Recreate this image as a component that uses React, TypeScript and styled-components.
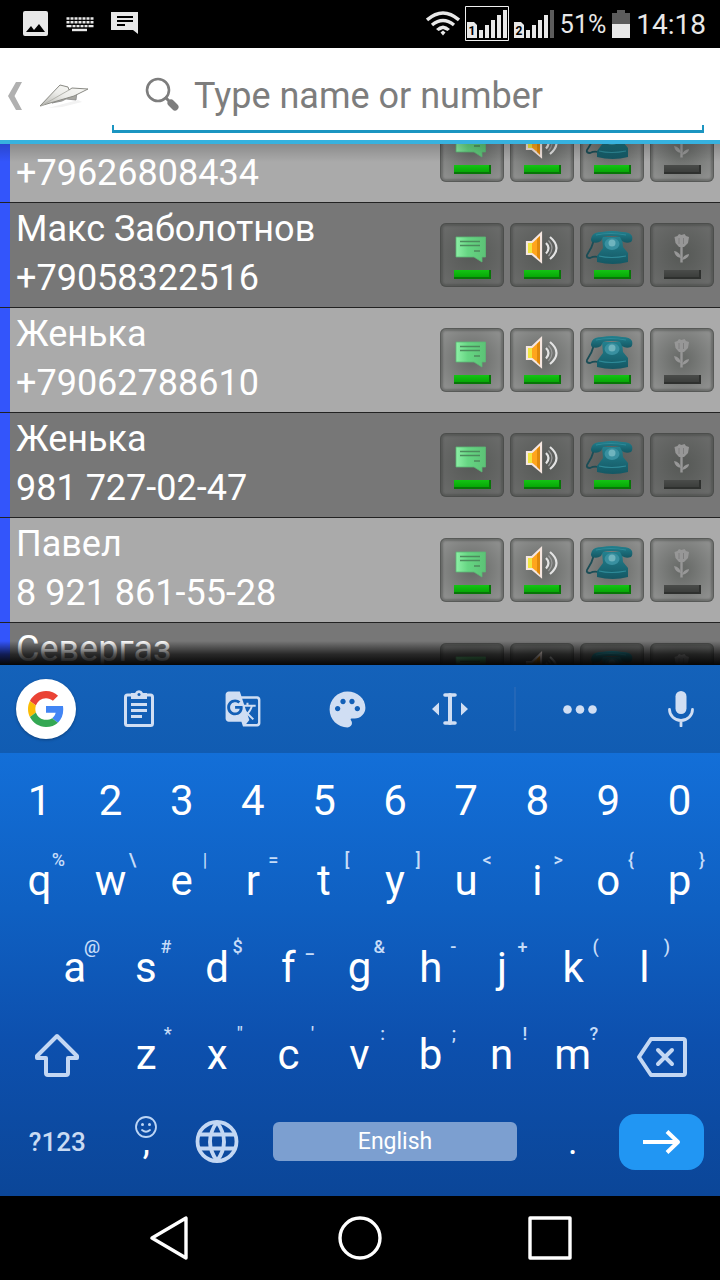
import React from 'react';
import styled, { createGlobalStyle, css } from 'styled-components';
import { MdGTranslate, MdPalette } from 'react-icons/md';

const GlobalStyle = createGlobalStyle`
  * { box-sizing: border-box; }
  body { margin: 0; background: #000; font-family: Roboto, "Liberation Sans", sans-serif; }
  button { border: 0; padding: 0; margin: 0; background: none; color: inherit; font: inherit; cursor: pointer; }
  svg { display: block; flex: none; }
`;

const Screen = styled.div`
  display: flex;
  flex-direction: column;
  height: 100vh;
  overflow: hidden;
`;

/* ---------- status bar ---------- */

const StatusBar = styled.div`
  flex: none;
  display: flex;
  justify-content: space-between;
  align-items: center;
  height: 48px;
  padding: 0 14px 0 22px;
  background: #000;
  color: #e8e8e8;
`;

const StatusGroup = styled.div<{ $gap: number }>`
  display: flex;
  align-items: center;
  gap: ${(p) => p.$gap}px;
`;

const StatusText = styled.span<{ $size: number }>`
  font-size: ${(p) => p.$size}px;
  line-height: 32px;
  padding-top: 2px;
`;

const PictureIcon = () => (
  <svg width="27" height="27" viewBox="0 0 27 27" aria-hidden="true">
    <path fillRule="evenodd" fill="#e8e8e8" d="M3 0h21a2 2 0 0 1 2 2v21a2 2 0 0 1-2 2H3a2 2 0 0 1-2-2V2a2 2 0 0 1 2-2ZM4 21h19l-6-8-5 6-3-4Z" />
  </svg>
);

const KeyboardIcon = () => (
  <svg width="28" height="27" viewBox="0 0 28 27" aria-hidden="true">
    <g stroke="#e8e8e8" strokeWidth="2.4">
      <path d="M.5 7.500h27" strokeDasharray="3 1" />
      <path d="M.5 11.300h27" strokeDasharray="3 1" />
      <path d="M.5 15.100h27" strokeDasharray="5 1 3 1 3 1 3 1 3 1 5 1" />
      <path d="M6 19h15" />
    </g>
  </svg>
);

const MessageIcon = () => (
  <svg width="28" height="27" viewBox="0 0 28 27" aria-hidden="true">
    <path fill="#e8e8e8" d="M-1 1h27v22l-5-4H-1Z" transform="translate(1 0)" />
    <path stroke="#000" strokeWidth="2" d="M6 6h16M6 10h16M6 14h8" />
  </svg>
);

const WifiIcon = () => (
  <svg width="34" height="26" viewBox="0 0 34 26" aria-hidden="true">
    <g fill="none" stroke="#e8e8e8" strokeWidth="3.400">
      <path d="M1 9Q17-5 33 9" />
      <path d="M6 14Q17 5 28 14" />
    </g>
    <path fill="#e8e8e8" d="M10 18q7-7 14 0l-2.500 2-4.500-2-4.500 2Z" />
    <path fill="#e8e8e8" d="M17 19.500l2.500 2-2.500 3-2.500-3Z" />
  </svg>
);

const SignalIcon = ({ sim, full }: { sim: string; full?: boolean }) => (
  <svg width={full ? 44 : 41} height="36" viewBox={full ? '0 0 44 36' : '2 0 41 36'} aria-hidden="true">
    {full && <path d="M.5.500h43v34H.5Z" fill="none" stroke="#f0f0f0" />}
    <path fill="#e8e8e8" d="M2 16h7l3 3v13H2Z" />
    <text x="7" y="29" fontSize="12" fontWeight="700" textAnchor="middle" fill="#000">{sim}</text>
    <path fill="#e8e8e8" d="M14 24h4v8h-4ZM20 19h4v13h-4ZM26 14h4v18h-4ZM32 9h4v23h-4Z" />
    <path fill={full ? '#e8e8e8' : '#5c5c5c'} d="M38 4h4v28h-4Z" />
  </svg>
);

const BatteryIcon = () => (
  <svg width="18" height="28" viewBox="0 0 18 28" aria-hidden="true">
    <path fill="#5c5c5c" d="M5 0h8v3h5v11H0V3h5Z" />
    <path fill="#e8e8e8" d="M0 14h18v14H0Z" />
  </svg>
);

/* ---------- search header ---------- */

const Header = styled.header`
  flex: none;
  display: flex;
  align-items: stretch;
  height: 96px;
  padding-right: 16px;
  background: #fff;
  border-bottom: 4px solid #37b2df;
`;

const UpButton = styled.button`
  flex: none;
  display: flex;
  align-items: center;
  gap: 17px;
  width: 112px;
  padding: 4px 0 0 7px;
`;

const SearchField = styled.label`
  flex: 1;
  display: flex;
  align-items: center;
  gap: 14px;
  min-width: 0;
  margin-bottom: 7px;
  padding: 10px 8px 0 32px;
  background:
    linear-gradient(#1b95c1, #1b95c1) left bottom / 2px 8px no-repeat,
    linear-gradient(#1b95c1, #1b95c1) right bottom / 2px 8px no-repeat,
    linear-gradient(#1b95c1, #1b95c1) left bottom / 100% 3px no-repeat;
`;

const SearchInput = styled.input`
  flex: 1;
  min-width: 0;
  height: 48px;
  padding: 0;
  border: 0;
  outline: 0;
  background: none;
  font: 36px Roboto, "Liberation Sans", sans-serif;
  color: #222;
  &::placeholder { color: #7d7d7d; opacity: 1; }
`;

const ChevronIcon = () => (
  <svg width="16" height="28" viewBox="0 0 16 28" aria-hidden="true">
    <path fill="#b0b0b0" d="M9 0h6L7.500 14 15 28H9L1 14Z" />
  </svg>
);

const PlaneIcon = () => (
  <svg width="50" height="28" viewBox="0 0 50 28" aria-hidden="true">
    <defs>
      <linearGradient id="wing" x1="0" y1="1" x2="1" y2="0">
        <stop offset="0" stopColor="#b4b4ae" />
        <stop offset=".5" stopColor="#ededea" />
        <stop offset="1" stopColor="#fafaf7" />
      </linearGradient>
    </defs>
    <path fill="#f2f2f2" d="M8 26l30-8 4 2-20 5Z" />
    <path fill="#a8a8a2" stroke="#888" strokeWidth=".8" d="M12 21l25-11-1 8-10-1-4 2Z" />
    <path fill="url(#wing)" stroke="#8a8a84" strokeWidth="1" strokeLinejoin="round" d="M0 24L20 3l8 2 1 3 3-2 16 1L34 14Z" />
    <path fill="none" stroke="#b4b4ae" strokeWidth="1" d="M1 24L29 8" />
  </svg>
);

const SearchIcon = () => (
  <svg width="36" height="38" viewBox="0 0 36 38" aria-hidden="true">
    <circle cx="14" cy="13" r="11" fill="none" stroke="#7d7d7d" strokeWidth="2.600" />
    <path stroke="#7d7d7d" strokeWidth="3" d="M21 20l5 5" />
    <path stroke="#7d7d7d" strokeWidth="7" strokeLinecap="round" d="M27 26l4 4" />
  </svg>
);

/* ---------- contact list ---------- */

const Contacts = styled.ul`
  flex: 1 1 0;
  min-height: 0;
  position: relative;
  display: flex;
  flex-direction: column;
  margin: 0;
  padding: 0;
  list-style: none;
  overflow: hidden;
  &::before, &::after {
    content: '';
    position: absolute;
    left: 0;
    right: 0;
    pointer-events: none;
    z-index: 1;
  }
  &::before { top: 0; height: 18px; background: linear-gradient(rgba(0, 0, 0, .18), transparent); }
  &::after { bottom: 0; height: 24px; background: linear-gradient(transparent, rgba(0, 0, 0, .66) 55%, #060606); }
`;

type Cut = 'top' | 'bottom' | undefined;

const ContactRow = styled.li<{ $dark: boolean; $cut: Cut }>`
  flex: none;
  display: flex;
  justify-content: space-between;
  align-items: flex-start;
  height: 105px;
  overflow: hidden;
  padding: 0 6px 0 16px;
  background: linear-gradient(to right, #3355fb 10px, ${(p) => (p.$dark ? '#777' : '#aaa')} 10px);
  box-shadow: inset 0 -1px #222;
  ${(p) => p.$cut === 'top' && css`
    height: 59px;
    align-items: flex-end;
  `}
  ${(p) => p.$cut === 'bottom' && css`
    flex: 1 1 0;
    height: auto;
    box-shadow: none;
  `}
`;

const ContactText = styled.div`
  padding: 2px 0 5px;
  font-size: 36px;
  line-height: 49px;
  color: #fff;
  white-space: nowrap;
`;

const Toggles = styled.div`
  display: flex;
  gap: 6px;
  padding: 20px 0 21px;
`;

const Toggle = styled.button`
  display: flex;
  flex-direction: column;
  align-items: center;
  width: 64px;
  height: 64px;
  border-radius: 6px;
  background: radial-gradient(circle at 50% 50%, rgba(72, 76, 72, .66) 10%, rgba(72, 76, 72, .26) 90%);
  box-shadow: inset 0 0 0 1px rgba(60, 62, 60, .4), inset 0 0 2px 3px rgba(60, 62, 60, .4);
`;

const Led = styled.span<{ $on: boolean }>`
  width: 37px;
  height: 9px;
  background: ${(p) => (p.$on ? 'linear-gradient(#14c414, #07a807)' : 'linear-gradient(#4a4c4a, #3c3e3c)')};
  border: solid ${(p) => (p.$on ? '#087508' : '#2e302e')};
  border-width: 0 2px 2px 0;
`;

const ChatGlyph = () => (
  <svg width="64" height="47" viewBox="0 0 64 47" aria-hidden="true">
    <defs>
      <linearGradient id="chat" x1="0" y1="0" x2="1" y2="0">
        <stop offset="0" stopColor="#8df0a6" />
        <stop offset=".4" stopColor="#66d683" />
        <stop offset="1" stopColor="#5cc276" />
      </linearGradient>
    </defs>
    <path fill="url(#chat)" stroke="#5bb873" strokeWidth=".8" d="M16 14h29.500v20H42v5l-8-5H16Z" />
    <path stroke="#4d8a5d" strokeWidth="1.600" d="M20 18.500h20M20 22.500h20M34 28h6" />
  </svg>
);

const SpeakerGlyph = () => (
  <svg width="64" height="47" viewBox="0 0 64 47" aria-hidden="true">
    <path fill="#ffa51c" stroke="#f5e6e0" strokeWidth="2.200" d="M17 19h5l9-8.500v28L22 31h-5Z" />
    <path fill="#f2e640" d="M18 20h4v10h-4Z" />
    <path fill="#e08a0c" d="M27 16l3-3v24l-3-3Z" />
    <path fill="none" stroke="#e4e4e4" strokeWidth="2.200" d="M36 20q5 5 0 10.500M40 14q13 11 0 22" />
    <path fill="none" stroke="#9c9c9c" strokeWidth="1.200" d="M38.500 17.500q7 7.500 0 15.500" />
  </svg>
);

const PhoneGlyph = () => (
  <svg width="64" height="47" viewBox="0 0 64 47" aria-hidden="true">
    <defs>
      <linearGradient id="phone" x1="0" y1="0" x2="0" y2="1">
        <stop offset="0" stopColor="#23818f" />
        <stop offset="1" stopColor="#145763" />
      </linearGradient>
    </defs>
    <path fill="none" stroke="#1b4d56" strokeWidth="1.800" d="M14 17q-2 8-7 15-1 3 3 3 4-2 8-1" />
    <path fill="url(#phone)" d="M22 14h20l1 10 5 6v9q-15 4-31 0v-6l6-8Z" />
    <path fill="url(#phone)" d="M12 13q2-4 10-4 10-2 20 0 8 0 10 4 1 4-1 6-5 2-9-1l-2-4q-9-2-17 0l-2 4q-4 3-9 1-2-2 0-6Z" />
    <ellipse cx="32" cy="21" rx="7.500" ry="6" fill="#3990a0" />
    <circle cx="32" cy="20" r="3.500" fill="#6fb4be" />
    <path stroke="#2f8b99" strokeWidth="1.200" d="M19 33q12 3 27 0M16 12q14-3 30 0" fill="none" />
  </svg>
);

const FlowerGlyph = () => (
  <svg width="64" height="47" viewBox="0 0 64 47" aria-hidden="true">
    <path fill="#979797" d="M24.500 14l3-1 1.500-2 2.500 1 3-1 1.500 2 3 1-1 6-4 4h-5l-3.500-4Z" />
    <path stroke="#7e7e7e" strokeWidth="1" d="M29 15v6M33.500 15v6" />
    <path fill="none" stroke="#979797" strokeWidth="2.400" d="M31.500 24v15.500" />
    <path fill="#979797" d="M31 35q-6-1-7-7 6 1 7 7ZM32 37q1-5 7-6 0 4-7 6Z" />
  </svg>
);

const toggles = [
  { label: 'Messages', glyph: <ChatGlyph />, on: true },
  { label: 'Sound', glyph: <SpeakerGlyph />, on: true },
  { label: 'Calls', glyph: <PhoneGlyph />, on: true },
  { label: 'Flower', glyph: <FlowerGlyph />, on: false },
];

const contacts: { name?: string; phone?: string; dark: boolean; cut?: Cut }[] = [
  { phone: '+79626808434', dark: false, cut: 'top' },
  { name: 'Макс Заболотнов', phone: '+79058322516', dark: true },
  { name: 'Женька', phone: '+79062788610', dark: false },
  { name: 'Женька', phone: '981 727-02-47', dark: true },
  { name: 'Павел', phone: '8 921 861-55-28', dark: false },
  { name: 'Севергаз', dark: true, cut: 'bottom' },
];

/* ---------- keyboard ---------- */

const Keyboard = styled.section`
  flex: none;
  color: #fff;
`;

const Tools = styled.div`
  display: grid;
  grid-template-columns: 87fr 104fr 104fr 104fr 102fr 28fr 102fr 89fr;
  align-items: center;
  height: 88px;
  background: linear-gradient(#1462ba, #115cb2);
  color: #d0def3;
`;

const Tool = styled.button<{ $side?: 'left' | 'right' }>`
  display: flex;
  align-items: center;
  justify-content: center;
  height: 88px;
  ${(p) => p.$side === 'left' && css`justify-content: flex-start; padding-left: 16px;`}
  ${(p) => p.$side === 'right' && css`justify-content: flex-end; padding-right: 25px;`}
`;

const GoogleDisc = styled.span`
  display: flex;
  align-items: center;
  justify-content: center;
  width: 60px;
  height: 60px;
  border-radius: 50%;
  background: #fff;
  box-shadow: 0 1px 3px rgba(0, 0, 0, .3);
`;

const ToolDivider = styled.span`
  justify-self: center;
  width: 2px;
  height: 44px;
  background: #2367b8;
`;

const Keys = styled.div`
  padding: 12px 5px 11px 4px;
  background: linear-gradient(#136fd8, #0f60c2 35%, #0d50ae 65%, #0b4698);
`;

const KeyRow = styled.div<{ $columns: string; $height?: number; $inset?: number }>`
  display: grid;
  grid-template-columns: ${(p) => p.$columns};
  height: ${(p) => p.$height ?? 87}px;
  padding: 0 ${(p) => p.$inset ?? 0}px;
`;

const Key = styled.button<{ $size?: number }>`
  position: relative;
  display: flex;
  align-items: center;
  justify-content: center;
  min-width: 0;
  font-size: ${(p) => p.$size ?? 42}px;
  line-height: 48px;
`;

const ModeKey = styled(Key)`
  font-size: 26px;
  font-weight: 500;
  color: #c9dbf3;
`;

const Hint = styled.span`
  position: absolute;
  top: 13px;
  right: 10px;
  font-size: 18px;
  font-weight: 500;
  line-height: 20px;
  color: #c6dcf8;
`;

const EmojiHint = styled.span`
  position: absolute;
  top: 18px;
  left: 0;
  right: 0;
  display: flex;
  justify-content: center;
`;

const SpaceKey = styled.button`
  align-self: center;
  height: 39px;
  margin: 0 20px;
  border-radius: 6px;
  background: #7c9fd0;
  font-size: 23px;
  line-height: 40px;
`;

const EnterKey = styled.button`
  align-self: center;
  display: flex;
  align-items: center;
  justify-content: center;
  height: 56px;
  margin: 0 11px;
  border-radius: 16px;
  background: #2196f3;
`;

const GoogleG = () => (
  <svg width="36" height="36" viewBox="0 0 48 48" aria-hidden="true">
    <path fill="#EA4335" d="M24 9.500c3.540 0 6.710 1.220 9.210 3.600l6.850-6.850C35.900 2.380 30.470 0 24 0 14.620 0 6.510 5.380 2.560 13.220l7.980 6.190C12.430 13.720 17.740 9.500 24 9.500z" />
    <path fill="#4285F4" d="M46.980 24.550c0-1.570-.15-3.090-.38-4.550H24v9.020h12.940c-.58 2.960-2.260 5.480-4.780 7.180l7.730 6c4.510-4.180 7.090-10.360 7.090-17.650z" />
    <path fill="#FBBC05" d="M10.530 28.590c-.48-1.450-.76-2.990-.76-4.590s.27-3.140.76-4.590l-7.980-6.190C.92 16.460 0 20.120 0 24c0 3.880.92 7.540 2.560 10.780l7.970-6.190z" />
    <path fill="#34A853" d="M24 48c6.480 0 11.930-2.130 15.890-5.810l-7.730-6c-2.150 1.450-4.920 2.300-8.160 2.300-6.260 0-11.570-4.220-13.470-9.910l-7.980 6.190C6.510 42.620 14.620 48 24 48z" />
  </svg>
);

const ClipboardIcon = () => (
  <svg width="30" height="38" viewBox="0 0 30 38" aria-hidden="true">
    <rect x="1.500" y="5" width="27" height="30.500" rx="2" fill="none" stroke="currentColor" strokeWidth="3" />
    <path fill="currentColor" d="M7 3h4a4.300 4.300 0 0 1 8 0h4v6H7Z" />
    <circle cx="15" cy="4.500" r="1.500" fill="#135fb6" />
    <path stroke="currentColor" strokeWidth="3" d="M7 14.500h16M7 20.500h16M7 26.500h11" />
  </svg>
);

const TextCursorIcon = () => (
  <svg width="36" height="32" viewBox="0 0 36 32" aria-hidden="true">
    <g fill="none" stroke="currentColor" strokeWidth="4" strokeLinecap="round">
      <path d="M18 2v28" />
      <path d="M13 2h10M13 30h10" strokeWidth="3.600" />
    </g>
    <path fill="currentColor" d="M7 9.500v13L0 16ZM29 9.500v13l7-6.500Z" />
  </svg>
);

const MoreIcon = () => (
  <svg width="34" height="10" viewBox="0 0 34 10" fill="currentColor" aria-hidden="true">
    <circle cx="4.500" cy="5.500" r="4.300" />
    <circle cx="17" cy="5.500" r="4.300" />
    <circle cx="29.500" cy="5.500" r="4.300" />
  </svg>
);

const MicIcon = () => (
  <svg width="28" height="36" viewBox="0 0 28 36" aria-hidden="true">
    <rect x="8.500" y="0" width="11" height="23" rx="5.500" fill="currentColor" />
    <path fill="none" stroke="currentColor" strokeWidth="2.800" strokeLinecap="round" d="M2.500 18.500a11.500 11 0 0 0 23 0M14 30v5" />
  </svg>
);

const ShiftIcon = () => (
  <svg width="46" height="46" viewBox="0 0 46 46" aria-hidden="true">
    <path fill="none" stroke="#c3d7f3" strokeWidth="4" strokeLinejoin="round" d="M23 4L3 24v2h9v15q0 2 2 2h18q2 0 2-2V26h9v-2Z" />
  </svg>
);

const BackspaceIcon = () => (
  <svg width="52" height="44" viewBox="0 0 52 44" aria-hidden="true">
    <g fill="none" stroke="#c3d7f3" strokeWidth="4" strokeLinejoin="round" strokeLinecap="round">
      <path d="M15 6h32q2 0 2 2v32q0 2-2 2H15L3 24Z" />
      <path d="M22 17l14 14M36 17L22 31" />
    </g>
  </svg>
);

const SmileIcon = () => (
  <svg width="22" height="22" viewBox="0 0 22 22" aria-hidden="true">
    <g fill="none" stroke="#bcd5f5" strokeWidth="1.800" strokeLinecap="round">
      <circle cx="11" cy="11" r="10" />
      <path d="M7 14q4 3.500 8 0" />
    </g>
    <circle cx="7.500" cy="8.500" r="1.500" fill="#bcd5f5" />
    <circle cx="14.500" cy="8.500" r="1.500" fill="#bcd5f5" />
  </svg>
);

const GlobeIcon = () => (
  <svg width="44" height="44" viewBox="0 0 44 44" aria-hidden="true">
    <g fill="none" stroke="#c3d7f3" strokeWidth="3.800">
      <circle cx="22" cy="21.500" r="19.500" />
      <path d="M22 2Q8 21.500 22 41M22 2Q36 21.500 22 41M4 14.500h36M4 28.500h36" />
    </g>
  </svg>
);

const ArrowIcon = () => (
  <svg width="40" height="24" viewBox="0 0 40 24" aria-hidden="true">
    <path fill="none" stroke="#fff" strokeWidth="4" strokeLinejoin="round" d="M1 12h35M25 1.500L36 12 25 22.500" />
  </svg>
);

const digits = '1234567890'.split('');
const topLetters = [['q', '%'], ['w', '\\'], ['e', '|'], ['r', '='], ['t', '['], ['y', ']'], ['u', '<'], ['i', '>'], ['o', '{'], ['p', '}']];
const homeLetters = [['a', '@'], ['s', '#'], ['d', '$'], ['f', '_'], ['g', '&'], ['h', '-'], ['j', '+'], ['k', '('], ['l', ')']];
const lowerLetters = [['z', '*'], ['x', '"'], ['c', "'"], ['v', ':'], ['b', ';'], ['n', '!'], ['m', '?']];

const LetterKeys = ({ letters }: { letters: string[][] }) => (
  <>
    {letters.map(([letter, hint]) => (
      <Key key={letter} type="button">
        {letter}
        <Hint>{hint}</Hint>
      </Key>
    ))}
  </>
);

/* ---------- navigation bar ---------- */

const NavBar = styled.nav`
  flex: none;
  display: grid;
  grid-template-columns: repeat(3, 1fr);
  height: 84px;
  padding: 0 75px;
  background: #000;
`;

const NavButton = styled.button`
  display: flex;
  align-items: center;
  justify-content: center;
`;

const NavIcon = ({ children }: { children: React.ReactNode }) => (
  <svg width="44" height="44" viewBox="0 0 44 44" fill="none" stroke="#fff" strokeWidth="3.400" strokeLinejoin="round" aria-hidden="true">
    {children}
  </svg>
);

export default function App() {
  return (
    <Screen>
      <GlobalStyle />
      <StatusBar>
        <StatusGroup $gap={17}>
          <PictureIcon />
          <KeyboardIcon />
          <MessageIcon />
        </StatusGroup>
        <StatusGroup $gap={5}>
          <WifiIcon />
          <SignalIcon sim="1" full />
          <SignalIcon sim="2" />
          <StatusGroup $gap={6}>
            <StatusText $size={25}>51%</StatusText>
            <BatteryIcon />
            <StatusText $size={28}>14:18</StatusText>
          </StatusGroup>
        </StatusGroup>
      </StatusBar>

      <Header>
        <UpButton type="button" aria-label="Back">
          <ChevronIcon />
          <PlaneIcon />
        </UpButton>
        <SearchField>
          <SearchIcon />
          <SearchInput type="text" placeholder="Type name or number" />
        </SearchField>
      </Header>

      <Contacts>
        {contacts.map((contact, i) => (
          <ContactRow key={i} $dark={contact.dark} $cut={contact.cut}>
            <ContactText>
              {contact.name && <div>{contact.name}</div>}
              {contact.phone && <div>{contact.phone}</div>}
            </ContactText>
            <Toggles>
              {toggles.map((toggle) => (
                <Toggle key={toggle.label} type="button" aria-label={toggle.label} aria-pressed={toggle.on}>
                  {toggle.glyph}
                  <Led $on={toggle.on} />
                </Toggle>
              ))}
            </Toggles>
          </ContactRow>
        ))}
      </Contacts>

      <Keyboard>
        <Tools>
          <Tool type="button" aria-label="Google" $side="left">
            <GoogleDisc><GoogleG /></GoogleDisc>
          </Tool>
          <Tool type="button" aria-label="Clipboard"><ClipboardIcon /></Tool>
          <Tool type="button" aria-label="Translate"><MdGTranslate size={38} /></Tool>
          <Tool type="button" aria-label="Themes"><MdPalette size={43} /></Tool>
          <Tool type="button" aria-label="Text editing"><TextCursorIcon /></Tool>
          <ToolDivider />
          <Tool type="button" aria-label="More"><MoreIcon /></Tool>
          <Tool type="button" aria-label="Voice input" $side="right"><MicIcon /></Tool>
        </Tools>
        <Keys>
          <KeyRow $columns="repeat(10, 1fr)" $height={72}>
            {digits.map((digit) => <Key key={digit} type="button">{digit}</Key>)}
          </KeyRow>
          <KeyRow $columns="repeat(10, 1fr)">
            <LetterKeys letters={topLetters} />
          </KeyRow>
          <KeyRow $columns="repeat(9, 1fr)" $inset={35}>
            <LetterKeys letters={homeLetters} />
          </KeyRow>
          <KeyRow $columns="3fr repeat(7, 2fr) 3fr">
            <Key type="button" aria-label="Shift"><ShiftIcon /></Key>
            <LetterKeys letters={lowerLetters} />
            <Key type="button" aria-label="Backspace"><BackspaceIcon /></Key>
          </KeyRow>
          <KeyRow $columns="3fr 2fr 2fr 8fr 2fr 3fr">
            <ModeKey type="button">?123</ModeKey>
            <Key type="button" $size={36}>
              <EmojiHint><SmileIcon /></EmojiHint>
              ,
            </Key>
            <Key type="button" aria-label="Language"><GlobeIcon /></Key>
            <SpaceKey type="button">English</SpaceKey>
            <Key type="button" $size={36}>.</Key>
            <EnterKey type="button" aria-label="Enter"><ArrowIcon /></EnterKey>
          </KeyRow>
        </Keys>
      </Keyboard>

      <NavBar>
        <NavButton type="button" aria-label="Back">
          <NavIcon><path d="M38 2v40L4 22Z" /></NavIcon>
        </NavButton>
        <NavButton type="button" aria-label="Home">
          <NavIcon><circle cx="22" cy="22" r="20" /></NavIcon>
        </NavButton>
        <NavButton type="button" aria-label="Recent apps">
          <NavIcon><path d="M2 2h40v40H2Z" /></NavIcon>
        </NavButton>
      </NavBar>
    </Screen>
  );
}
